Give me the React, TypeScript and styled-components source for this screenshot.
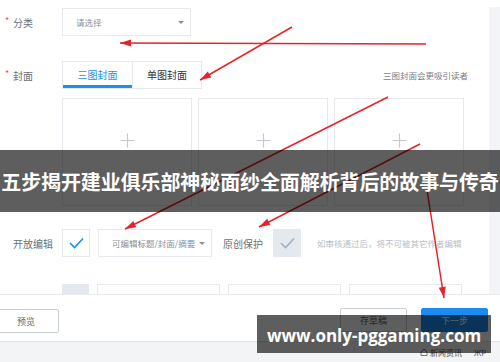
import React from "react";
import styled, {createGlobalStyle} from "styled-components";

const GlobalStyle = createGlobalStyle`
    html, body {
        margin: 0;
        padding: 0;
        background: #fff;
        font-family: "Noto Sans CJK SC", "Noto Sans", sans-serif;
    }
`;

const Page = styled.div`
    position: relative;
    width: 500px;
    height: 362px;
    overflow: hidden;
    background: #fff;
`;

const FormArea = styled.div`
    display: flex;
    height: 294px;
    overflow: hidden;
`;

const Form = styled.div`
    width: 489px;
    padding-top: 8px;
    display: flex;
    flex-direction: column;
`;

const SideStrip = styled.div`
    flex: 1;
    margin-top: 7px;
    background: #f2f4f8;
`;

const Row = styled.div<{ $top?: number }>`
    display: flex;
    align-items: center;
    margin-top: ${p => p.$top || 0}px;
    height: 28px;
`;

const Label = styled.div<{ $required?: boolean }>`
    width: 49px;
    padding-left: 13px;
    font-size: 10px;
    color: #6b6f76;
    white-space: nowrap;
    position: relative;

    ${p => p.$required && `
        &::before {
            content: "*";
            color: #f04a4a;
            font-size: 9px;
            position: absolute;
            left: 5px;
            top: -1px;
        }
    `}
`;

const Select = styled.div<{ $width: number }>`
    box-sizing: border-box;
    width: ${p => p.$width}px;
    height: 28px;
    border: 1px solid #e6e9ee;
    display: flex;
    align-items: center;
    justify-content: space-between;
    padding: 0 6px 0 13px;
    font-size: 8.5px;
    color: #8a8f99;
`;

const Caret = styled.span`
    width: 0;
    height: 0;
    border-left: 3px solid transparent;
    border-right: 3px solid transparent;
    border-top: 3.5px solid #8a8f99;
`;

const Tabs = styled.div`
    display: flex;
    box-sizing: border-box;
    height: 28px;
    border: 1px solid #e6e9ee;
`;

const Tab = styled.div<{ $active?: boolean }>`
    box-sizing: border-box;
    width: 69px;
    display: flex;
    align-items: center;
    justify-content: center;
    font-size: 10px;
    color: ${p => p.$active ? "#1e8ff0" : "#333"};
    border-bottom: 3px solid ${p => p.$active ? "#1e8ff0" : "transparent"};
    padding-top: 2px;
    & + & {
        border-left: 1px solid #e6e9ee;
    }
`;

const Hint = styled.div<{ $right?: boolean }>`
    font-size: 8.5px;
    color: ${p => p.$right ? "#777c85" : "#b9bdc4"};
    white-space: nowrap;
    margin-left: ${p => p.$right ? "auto" : "8px"};
    margin-right: ${p => p.$right ? "21px" : "0"};
`;

const CoverRow = styled.div`
    display: flex;
    gap: 5px;
    margin: 9px 0 0 62px;
`;

const CoverBox = styled.div`
    box-sizing: border-box;
    width: 130px;
    height: 108px;
    border: 1px solid #e6e9ee;
    display: flex;
    align-items: center;
    justify-content: center;
    padding-bottom: 24px;
    & + & {
        margin-left: 1px;
    }
`;

const Check = styled.div<{ $disabled?: boolean }>`
    box-sizing: border-box;
    width: 28px;
    height: 28px;
    margin-right: 8px;
    border: 1px solid ${p => p.$disabled ? "#e4e8ef" : "#e6e9ee"};
    background: ${p => p.$disabled ? "#e4e8ef" : "#fff"};
    display: flex;
    align-items: center;
    justify-content: center;
`;

const InlineLabel = styled.div`
    font-size: 10px;
    color: #6b6f76;
    margin: 0 10px 0 11px;
    white-space: nowrap;
`;

const PartRow = styled.div`
    display: flex;
    margin: 27px 0 0 62px;
    gap: 8px;
`;

const PartSquare = styled.div`
    width: 27px;
    height: 20px;
    background: #e4e8ef;
`;

const PartBox = styled.div<{ $width: number }>`
    box-sizing: border-box;
    width: ${p => p.$width}px;
    height: 20px;
    border: 1px solid #e6e9ee;
`;

const Footer = styled.div`
    box-sizing: border-box;
    height: 47px;
    border-top: 1px solid #e8eaee;
    display: flex;
    align-items: flex-start;
    padding-top: 13px;
`;

const Button = styled.div<{ $primary?: boolean; $width: number }>`
    box-sizing: border-box;
    width: ${p => p.$width}px;
    height: 24px;
    display: flex;
    align-items: center;
    justify-content: center;
    font-size: 9px;
    border: 1px solid ${p => p.$primary ? "#1a8cf0" : "#c9ced6"};
    background: ${p => p.$primary ? "#1a8cf0" : "#fff"};
    color: ${p => p.$primary ? "#fff" : "#666"};
    border-radius: 2px;
`;

const PreviewButton = styled(Button)`
    margin-left: -7px;
    margin-top: 1px;
`;

const RightButtons = styled.div`
    margin-left: auto;
    margin-right: 12px;
    display: flex;
    gap: 14px;
`;

const BottomBar = styled.div`
    box-sizing: border-box;
    height: 21px;
    background: #f3f4f6;
    border-top: 1px solid #e2e4e8;
    display: flex;
    align-items: center;
    padding-left: 420px;
    gap: 12px;
    font-size: 8px;
    color: #555;
`;

const NewsLink = styled.div`
    display: flex;
    align-items: center;
    gap: 2px;
`;

const Arrows = styled.svg`
    position: absolute;
    left: 0;
    top: 0;
    pointer-events: none;
`;

const Banner = styled.div`
    position: absolute;
    left: 0;
    top: 150px;
    width: 500px;
    height: 62px;
    background: rgba(0, 0, 0, 0.63);
    display: flex;
    align-items: center;
    justify-content: center;
    color: #fff;
    font-size: 20px;
    font-weight: 700;
    white-space: nowrap;
    letter-spacing: -0.1px;
`;

const Watermark = styled.div`
    position: absolute;
    left: 257px;
    top: 315px;
    width: 234px;
    height: 38px;
    background: rgba(0, 0, 0, 0.63);
    display: flex;
    align-items: center;
    justify-content: center;
    color: #fff;
    font-family: "Open Sans", "Liberation Sans", sans-serif;
    font-size: 17px;
    font-weight: 700;
    white-space: nowrap;
    padding-top: 2px;
    box-sizing: border-box;
`;

function Plus() {
    return (
        <svg width="15" height="15" viewBox="0 0 15 15">
            <path d="M7.5 0.5v14M0.5 7.5h14" stroke="#c4c8cf" strokeWidth="1.2"/>
        </svg>
    );
}

function Tick({color}: { color: string }) {
    return (
        <svg width="15" height="12" viewBox="0 0 15 12">
            <polyline points="1,6 5.5,10.5 14,1.5" fill="none" stroke={color} strokeWidth="1.6"/>
        </svg>
    );
}

const ARROWS = [
    {x1: 426, y1: 44, x2: 120, y2: 43},
    {x1: 292, y1: 27, x2: 200, y2: 80},
    {x1: 388, y1: 97, x2: 125, y2: 229},
    {x1: 420, y1: 144, x2: 259, y2: 227},
    {x1: 427, y1: 190, x2: 444, y2: 298},
];

function arrowHead(a: { x1: number; y1: number; x2: number; y2: number }) {
    const ang = Math.atan2(a.y2 - a.y1, a.x2 - a.x1);
    const len = 11, half = 3.5;
    const bx = a.x2 - Math.cos(ang) * len;
    const by = a.y2 - Math.sin(ang) * len;
    const px = -Math.sin(ang) * half, py = Math.cos(ang) * half;
    return `${a.x2},${a.y2} ${bx + px},${by + py} ${bx - px},${by - py}`;
}

export default function App() {
    return (
        <>
            <GlobalStyle/>
            <Page>
                <FormArea>
                    <Form>
                        <Row>
                            <Label $required>分类</Label>
                            <Select $width={129}>请选择<Caret/></Select>
                        </Row>
                        <Row $top={25}>
                            <Label $required>封面</Label>
                            <Tabs>
                                <Tab $active>三图封面</Tab>
                                <Tab>单图封面</Tab>
                            </Tabs>
                            <Hint $right>三图封面会更吸引读者</Hint>
                        </Row>
                        <CoverRow>
                            <CoverBox><Plus/></CoverBox>
                            <CoverBox><Plus/></CoverBox>
                            <CoverBox><Plus/></CoverBox>
                        </CoverRow>
                        <Row $top={23}>
                            <Label>开放编辑</Label>
                            <Check><Tick color="#1e8ff0"/></Check>
                            <Select $width={114}>可编辑标题/封面/摘要<Caret/></Select>
                            <InlineLabel>原创保护</InlineLabel>
                            <Check $disabled><Tick color="#a9afb9"/></Check>
                            <Hint>如审核通过后，将不可被其它作者编辑</Hint>
                        </Row>
                        <PartRow>
                            <PartSquare/>
                            <PartBox $width={123}/>
                            <PartBox $width={113}/>
                            <PartBox $width={113}/>
                        </PartRow>
                    </Form>
                    <SideStrip/>
                </FormArea>
                <Footer>
                    <PreviewButton $width={66}>预览</PreviewButton>
                    <RightButtons>
                        <Button $width={67}>存草稿</Button>
                        <Button $primary $width={67}>下一步</Button>
                    </RightButtons>
                </Footer>
                <BottomBar>
                    <NewsLink>
                        <svg width="8" height="8" viewBox="0 0 8 8">
                            <path d="M1 4L4 1l3 3v3.5H1z" fill="none" stroke="#555" strokeWidth="0.8"/>
                        </svg>
                        新闻资讯
                    </NewsLink>
                    <span>ЖР</span>
                </BottomBar>
                <Arrows width="500" height="362" viewBox="0 0 500 362">
                    {ARROWS.map((a, i) => (
                        <g key={i}>
                            <line x1={a.x1} y1={a.y1} x2={a.x2} y2={a.y2} stroke="#e5242a" strokeWidth="1.5"/>
                            <polygon points={arrowHead(a)} fill="#e5242a"/>
                        </g>
                    ))}
                </Arrows>
                <Banner>五步揭开建业俱乐部神秘面纱全面解析背后的故事与传奇</Banner>
                <Watermark>www.only-pggaming.com</Watermark>
            </Page>
        </>
    );
}
